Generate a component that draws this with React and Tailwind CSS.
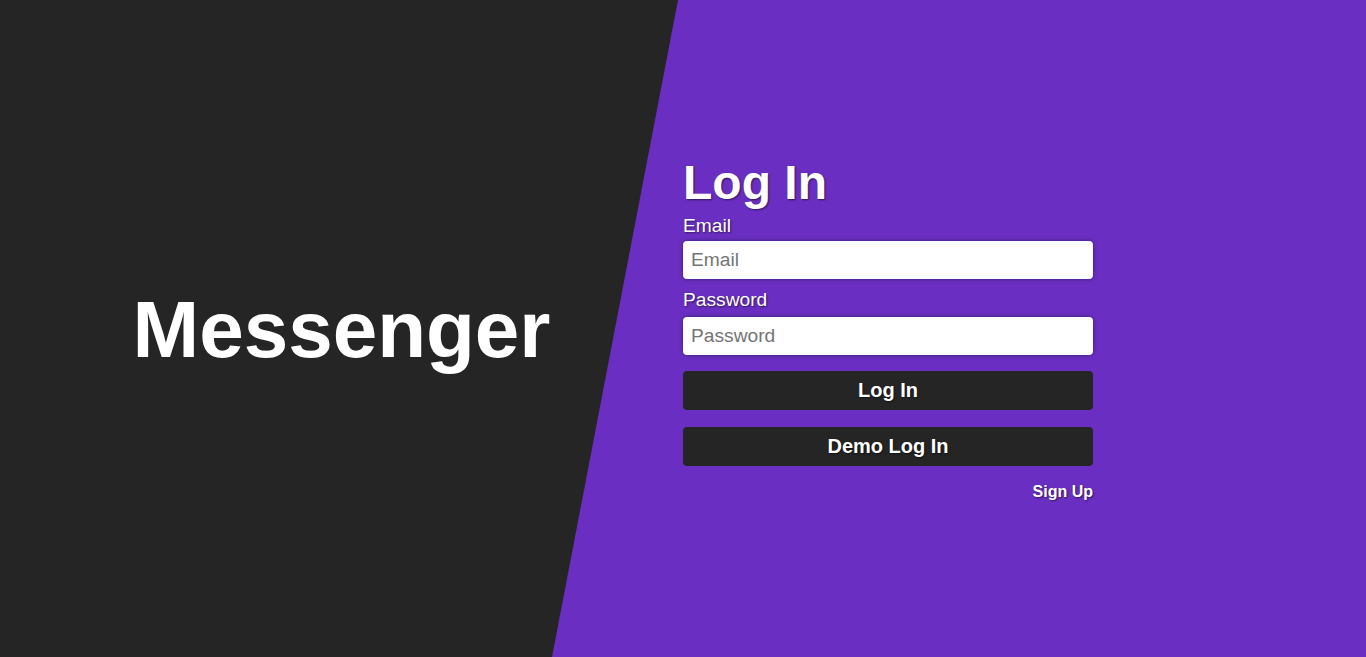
import React, { useState } from 'react';

export default function App() {
  const [email, setEmail] = useState('');
  const [password, setPassword] = useState('');

  const shadow = '[text-shadow:1px_1px_2px_rgba(0,0,0,0.55)]';

  return (
    <div className="relative w-full h-[657px] overflow-hidden bg-[#6a2fc2] font-['Liberation_Sans',Arial,sans-serif] text-white">
      {/* dark diagonal panel */}
      <svg className="absolute inset-0 w-full h-full" viewBox="0 0 1366 657" preserveAspectRatio="none">
        <polygon points="0,0 678,0 552,657 0,657" fill="#252525" />
      </svg>

      <div className="relative flex h-full">
        <div className="w-1/2 flex items-center justify-center">
          <h1 className="text-[80px] font-bold leading-none mt-[2px]">Messenger</h1>
        </div>

        <div className="w-1/2 flex items-center">
          <form className="w-[410px] flex flex-col mt-[-1px]" onSubmit={(e) => e.preventDefault()}>
            <h2 className={`text-5xl font-bold leading-[54px] ${shadow}`}>Log In</h2>

            <label className={`mt-[5px] text-[19.2px] leading-[22px] ${shadow}`}>Email</label>
            <input
              type="email"
              value={email}
              onChange={(e) => setEmail(e.target.value)}
              placeholder="Email"
              className="mt-1 h-[38px] rounded bg-white px-2 text-[19.2px] text-black placeholder:text-[#757575] outline-none shadow-[0_0_4px_rgba(0,0,0,0.45)]"
            />

            <label className={`mt-[10px] text-[19.2px] leading-[22px] ${shadow}`}>Password</label>
            <input
              type="password"
              value={password}
              onChange={(e) => setPassword(e.target.value)}
              placeholder="Password"
              className="mt-[6px] h-[38px] rounded bg-white px-2 text-[19.2px] text-black placeholder:text-[#757575] outline-none shadow-[0_0_4px_rgba(0,0,0,0.45)]"
            />

            <button type="submit" className={`mt-4 h-[39px] rounded bg-[#252525] text-xl font-bold ${shadow}`}>
              Log In
            </button>
            <button type="button" className={`mt-[17px] h-[39px] rounded bg-[#252525] text-xl font-bold ${shadow}`}>
              Demo Log In
            </button>

            <a href="#" className={`mt-[17px] self-end text-base font-bold leading-[18px] ${shadow}`}>
              Sign Up
            </a>
          </form>
        </div>
      </div>
    </div>
  );
}
